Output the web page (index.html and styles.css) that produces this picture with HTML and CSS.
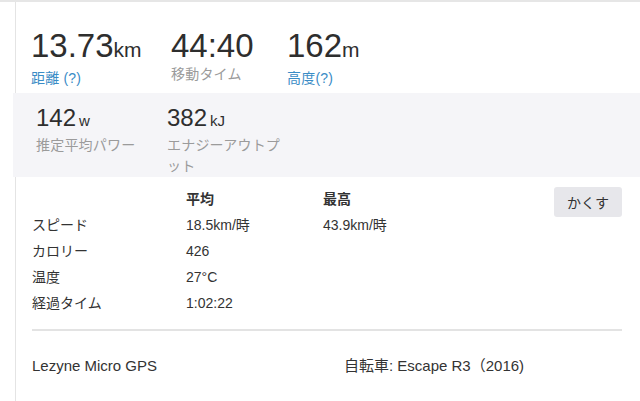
FILE: index.html
```html
<!DOCTYPE html>
<html lang="ja">
<head>
<meta charset="utf-8">
<title>アクティビティ</title>
<link rel="stylesheet" href="styles.css">
</head>
<body>
<div class="top-rule"></div>
<div class="page">
  <section class="stats">
    <div class="stat">
      <div class="value">13.73<span class="unit">km</span></div>
      <div class="label link">距離 (?)</div>
    </div>
    <div class="stat">
      <div class="value">44:40</div>
      <div class="label">移動タイム</div>
    </div>
    <div class="stat">
      <div class="value">162<span class="unit">m</span></div>
      <div class="label link">高度(?)</div>
    </div>
  </section>

  <section class="panel">
    <div class="pstat">
      <div class="pvalue">142<span class="punit">w</span></div>
      <div class="label">推定平均パワー</div>
    </div>
    <div class="pstat narrow">
      <div class="pvalue">382<span class="punit">kJ</span></div>
      <div class="label">エナジーアウトプット</div>
    </div>
  </section>

  <section class="details">
    <div class="table">
      <div class="cell"></div><div class="cell head">平均</div><div class="cell head">最高</div>
      <div class="cell">スピード</div><div class="cell">18.5km/時</div><div class="cell">43.9km/時</div>
      <div class="cell">カロリー</div><div class="cell">426</div><div class="cell"></div>
      <div class="cell">温度</div><div class="cell">27°C</div><div class="cell"></div>
      <div class="cell">経過タイム</div><div class="cell">1:02:22</div><div class="cell"></div>
    </div>
    <button class="hide-btn" type="button">かくす</button>
  </section>

  <div class="rule"></div>

  <section class="footer">
    <div>Lezyne Micro GPS</div>
    <div>自転車: Escape R3（2016)</div>
  </section>
</div>
</body>
</html>
```

FILE: styles.css
```css
html, body {
  margin: 0;
  padding: 0;
  background: #ffffff;
}
body {
  font-family: "Liberation Sans", "Noto Sans CJK JP", sans-serif;
  color: #333333;
  font-size: 14px;
}
.top-rule {
  height: 2px;
  background: #e6e6e6;
}
.page {
  margin-left: 15px;
  border-left: 1px solid #e4e4e4;
  min-height: calc(100vh - 2px);
  box-sizing: border-box;
}
.stats {
  display: grid;
  grid-template-columns: 140px 116px auto;
  padding: 26px 0 0 15px;
  height: 91px;
  box-sizing: border-box;
}
.value {
  font-size: 33px;
  line-height: 36px;
  color: #2e2e2e;
}
.unit {
  font-size: 21px;
  margin-left: 0;
}
.label {
  font-size: 14px;
  line-height: 21px;
  color: #9b9b9b;
  letter-spacing: 0.2px;
}
.link {
  color: #3a8cc6;
}
.panel {
  margin-left: -3px;
  background: #f5f5f8;
  height: 84px;
  box-sizing: border-box;
  padding: 11px 0 0 23px;
  display: grid;
  grid-template-columns: 131px 120px;
}
.pvalue {
  font-size: 24px;
  line-height: 28px;
  color: #2e2e2e;
}
.punit {
  font-size: 15px;
  margin-left: 3px;
}
.details {
  display: flex;
  justify-content: space-between;
  align-items: flex-start;
  padding: 9px 18px 0 16px;
}
.table {
  display: grid;
  grid-template-columns: 154px 137px auto;
  line-height: 26px;
}
.head {
  font-weight: bold;
}
.hide-btn {
  width: 68px;
  height: 30px;
  margin-top: 1px;
  border: none;
  border-radius: 3px;
  background: #e7e7eb;
  color: #333333;
  font-family: "Liberation Sans", "Noto Sans CJK JP", sans-serif;
  font-size: 14px;
  padding: 0;
}
.rule {
  margin: 13px 18px 0 16px;
  height: 2px;
  background: #e3e3e3;
}
.footer {
  display: grid;
  grid-template-columns: 312px auto;
  padding: 25px 0 0 16px;
  line-height: 20px;
  font-size: 15px;
}
```
